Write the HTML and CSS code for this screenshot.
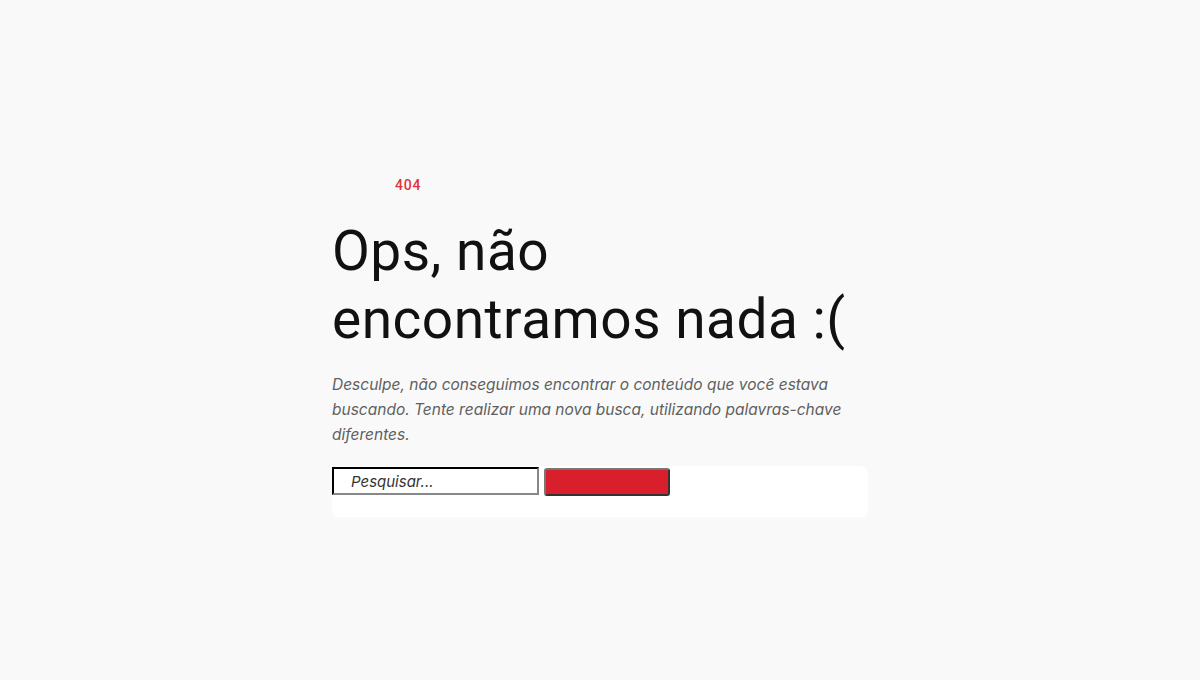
FILE: index.html
```html
<!DOCTYPE html>
<html lang="pt-BR">
<head>
<meta charset="utf-8">
<title>404</title>
<link rel="stylesheet" href="styles.css">
</head>
<body>
<main class="page">
  <section class="notfound">
    <div class="code">404</div>
    <h1 class="title">Ops, não encontramos nada :(</h1>
    <p class="text">Desculpe, não conseguimos encontrar o conteúdo que você estava buscando. Tente realizar uma nova busca, utilizando palavras-chave diferentes.</p>
    <form class="search">
      <input class="search-input" type="text" placeholder="Pesquisar...">
      <button class="search-btn" type="button"></button>
    </form>
  </section>
</main>
</body>
</html>
```
FILE: styles.css
```css
html, body {
  margin: 0;
  padding: 0;
  background: #f9f9f9;
}
.page {
  display: flex;
  justify-content: center;
  padding-top: 176px;
  height: 680px;
  box-sizing: border-box;
}
.notfound {
  width: 536px;
  display: flex;
  flex-direction: column;
}
.code {
  font-family: Roboto, "Liberation Sans", sans-serif;
  font-weight: 500;
  font-size: 14px;
  line-height: 18px;
  color: #e0343b;
  padding-left: 63px;
  letter-spacing: 0.8px;
}
.title {
  margin: 23px 0 0;
  font-family: Roboto, "Liberation Sans", sans-serif;
  font-weight: 400;
  font-size: 55px;
  line-height: 68px;
  letter-spacing: 0.5px;
  color: #111;
}
.text {
  margin: 19px 0 0;
  font-family: Inter, Roboto, sans-serif;
  font-style: italic;
  font-size: 15.5px;
  line-height: 25px;
  color: #5f5f5f;
}
.search {
  margin-top: 19px;
  background: #fff;
  border-radius: 7px;
  height: 51px;
  display: flex;
  align-items: flex-start;
  gap: 5px;
}
.search-input {
  box-sizing: border-box;
  width: 207px;
  height: 28px;
  margin: 1px 0 0;
  border: 2px inset #767676;
  border-color: #333 #888 #888 #333;
  padding: 0 0 0 17px;
  font-family: Inter, Roboto, sans-serif;
  font-style: italic;
  font-size: 15px;
  color: #222;
  background: #fff;
}
.search-input::placeholder {
  color: #333;
}
.search-btn {
  box-sizing: border-box;
  width: 126px;
  height: 28px;
  margin-top: 2px;
  background: #d91f2b;
  border: 2px solid #3a2a2a;
  border-color: #777 #333 #333 #777;
  border-radius: 3px;
  padding: 0;
}
```
